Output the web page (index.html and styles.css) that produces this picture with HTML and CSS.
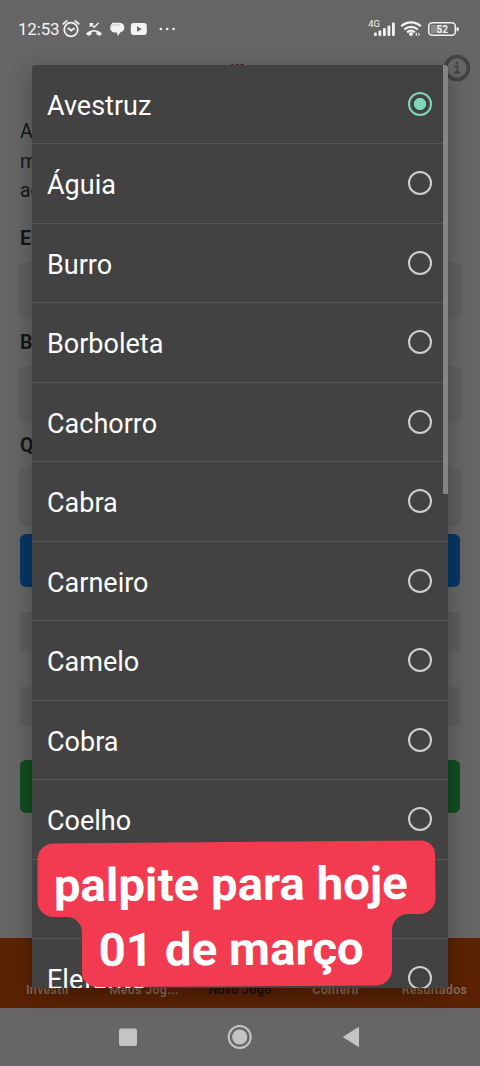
FILE: index.html
```html
<!DOCTYPE html>
<html lang="pt-BR">
<head>
<meta charset="utf-8">
<title>Novo Jogo</title>
<link rel="stylesheet" href="styles.css">
</head>
<body>
<div class="phone">
  <header class="status">
    <span class="clock">12:53</span>
    <svg class="status-left" width="110" height="24" viewBox="0 0 110 24" fill="none">
      <g stroke="#f2f2f2" stroke-width="1.8" stroke-linecap="round">
        <circle cx="9" cy="12.500" r="6.800"/>
        <path d="M6.300 11.300l2.900 2.400 2.800-2.200M1.200 6.900l3.600-3M16.800 6.900l-3.600-3"/>
      </g>
      <path d="M24 16.700c4.500-4.800 11.500-4.800 16 0l-2.300 2.400-3.300-1.800v-2.200c-1.600-.6-3.200-.6-4.800 0v2.200l-3.300 1.800z" fill="#f2f2f2"/>
      <path d="M28.300 10V6.700h3M28.800 7l3.400 3.300 4.300-4.300" stroke="#f2f2f2" stroke-width="1.400"/>
      <path d="M50.500 5.800h6a4.500 4.500 0 0 1 2 9.500l-2.800 3.600-.8-3.300h-2a5 5 0 0 1-4-7.800z" fill="#f2f2f2"/>
      <path d="M49 11c-.3-2.300 1-3.200 3.500-3.200H57.500" stroke="#aaa" stroke-width=".6"/>
      <rect x="68.800" y="6" width="16" height="12" rx="3" fill="#f2f2f2"/>
      <path d="M75 9.300v5.400l4.800-2.700z" fill="#656565"/>
      <g fill="#f2f2f2"><circle cx="98.800" cy="12" r="1.300"/><circle cx="105.200" cy="12" r="1.300"/><circle cx="111.600" cy="12" r="1.300"/></g>
    </svg>
    <span class="network">4G</span>
    <svg class="status-right" width="88" height="24" viewBox="0 0 88 24">
      <g fill="#f2f2f2">
        <rect x="0" y="15.500" width="2.800" height="3.500" rx="1"/><rect x="4.500" y="13.500" width="2.800" height="5.500" rx="1"/><rect x="9" y="11" width="2.800" height="8" rx="1"/><rect x="13.500" y="8.500" width="2.800" height="10.500" rx="1"/><rect x="18" y="5.500" width="2.800" height="13.500" rx="1"/>
        <circle cx="37" cy="17" r="2"/>
        <path d="M41.300 17.300l1.600-2v4.200zM46 17.300l-1.600-2v4.200z"/>
      </g>
      <g fill="none" stroke="#f2f2f2" stroke-width="2.200">
        <path d="M27.300 9.300c5.500-5.200 14-5.200 19.500 0M30.300 12.500c3.900-3.600 9.600-3.600 13.500 0M33.100 15.400c2.300-2 5.500-2 7.800 0"/>
      </g>
      <rect x="54.800" y="5.800" width="26.500" height="12.400" rx="3.500" fill="none" stroke="#f2f2f2" stroke-width="1.500"/>
      <path d="M57 8h11v8.300H57z" fill="#8c8c8c"/>
      <rect x="82.500" y="10.200" width="2.200" height="4" rx="1" fill="#f2f2f2"/>
      <text class="battery-text" x="68.300" y="15.700" text-anchor="middle">52</text>
    </svg>
  </header>

  <main class="page">
    <div class="title-row">
      <h1 class="title">Milhar</h1>
      <svg class="info" width="28" height="28" viewBox="0 0 28 28">
        <circle cx="14" cy="14" r="11.500" fill="none" stroke="#434343" stroke-width="3.600"/>
        <path d="M11.500 12h3v6.500M11 18.500h6" fill="none" stroke="#434343" stroke-width="1.800"/>
        <circle cx="14" cy="8.800" r="1.400" fill="#434343"/>
      </svg>
    </div>
    <p class="intro">A<br>m<br>ac</p>
    <h2 class="label">Es</h2>
    <div class="field"></div>
    <h2 class="label">Bi</h2>
    <div class="field"></div>
    <h2 class="label">Qu</h2>
    <div class="field"></div>
    <div class="button blue"></div>
    <div class="table"><div class="band"></div><div class="band light"></div><div class="band"></div></div>
    <div class="button green"></div>
  </main>

  <nav class="tabs">
    <span class="tab">Investir</span><span class="tab">Meus Jog...</span><span class="tab active">Novo Jogo</span><span class="tab">Conferir</span><span class="tab wide">Resultados</span>
  </nav>
  <footer class="system-nav">
    <svg width="480" height="58" viewBox="0 0 480 58">
      <rect x="119" y="20.500" width="18" height="17.500" rx="2.500" fill="#c5c3c6"/>
      <circle cx="239.700" cy="29" r="11" fill="none" stroke="#c5c3c6" stroke-width="2"/>
      <circle cx="239.700" cy="29" r="7.600" fill="#c5c3c6"/>
      <path d="M343.500 29l15-9.500v19z" fill="#c5c3c6" stroke="#c5c3c6" stroke-linejoin="round"/>
    </svg>
  </footer>

  <div class="dialog">
    <div class="option first"><span>Avestruz</span><i class="radio checked"></i></div>
    <div class="option"><span>Águia</span><i class="radio"></i></div>
    <div class="option"><span>Burro</span><i class="radio"></i></div>
    <div class="option"><span>Borboleta</span><i class="radio"></i></div>
    <div class="option"><span>Cachorro</span><i class="radio"></i></div>
    <div class="option"><span>Cabra</span><i class="radio"></i></div>
    <div class="option"><span>Carneiro</span><i class="radio"></i></div>
    <div class="option"><span>Camelo</span><i class="radio"></i></div>
    <div class="option"><span>Cobra</span><i class="radio"></i></div>
    <div class="option"><span>Coelho</span><i class="radio"></i></div>
    <div class="option"><span></span><i class="radio"></i></div>
    <div class="option"><span>Elefante</span><i class="radio"></i></div>
    <div class="scrollbar"></div>
  </div>

  <svg class="sticker" width="404" height="154" viewBox="0 0 404 154">
    <path d="M17.500 7.500L385 4.500A14 14 0 0 1 399 18.500L399.500 62A16 16 0 0 1 383.500 78L372 78A16 16 0 0 0 356 94L356 133.500A16 16 0 0 1 340 149.500L61 151A15 15 0 0 1 46 136L46 96A15 15 0 0 0 31 81L17.500 81A16 16 0 0 1 1.500 65L1.500 23.500A16 16 0 0 1 17.500 7.500Z" fill="#f23b50"/>
    <g class="sticker-text" transform="rotate(-.4 200 77)">
      <text x="18" y="64" textLength="354" lengthAdjust="spacingAndGlyphs">palpite para hoje</text>
      <text x="62.500" y="129" textLength="265" lengthAdjust="spacingAndGlyphs">01 de março</text>
    </g>
  </svg>
</div>
</body>
</html>
```

FILE: styles.css
```css
* { box-sizing: border-box; }
body { margin: 0; background: #656565; font-family: Roboto, "Liberation Sans", sans-serif; }
.phone { position: relative; width: 480px; height: 1066px; overflow: hidden; display: flex; flex-direction: column; background: #656565; }

.status { height: 54px; flex: none; display: flex; align-items: center; padding: 3px 18px 0 18px; color: #f2f2f2; }
.clock { font-size: 17px; width: 44px; line-height: 24px; letter-spacing: -.2px; white-space: nowrap; }
.status-left { overflow: visible; }
.network { margin-left: auto; font-size: 9.5px; line-height: 10px; padding-bottom: 9px; }
.status-right { margin-left: -6px; overflow: visible; }
.battery-text { font: 700 10px Roboto, sans-serif; fill: #f2f2f2; }

.page { height: 884px; flex: none; padding: 0 20px; color: #171717; }
.title-row { display: flex; justify-content: space-between; height: 63px; margin-right: -11px; }
.title { margin: 7px 0 0 193px; font-size: 19px; line-height: 22px; color: #45181f; }
.info { flex: none; }
.intro { margin: 0; font-size: 19.500px; line-height: 29.500px; height: 108px; }
.label { margin: 0; font-size: 19.500px; line-height: 28px; height: 37px; }
.field { width: 444px; height: 57px; margin: 0 -2px 9.500px; border-radius: 8px; background: #5e5e5e; }
.button { height: 53px; border-radius: 6px; }
.blue { background: #063766; margin-top: -2px; margin-bottom: 25px; }
.green { background: #124d20; }
.table { height: 114px; margin-bottom: 34px; }
.band { height: 39px; background: #5d5d5d; }
.band.light { height: 36px; background: #646464; }

.tabs { height: 70px; flex: none; display: grid; grid-template-columns: repeat(5, 1fr); align-items: end; padding-bottom: 10px; background: #5b2303; color: #85715f; font-size: 12.500px; font-weight: 500; letter-spacing: .3px; line-height: 16px; text-align: center; }
.tab { white-space: nowrap; }
.tab.active { color: #170b05; }
.tab.wide { padding-left: 5px; }
.system-nav { height: 58px; flex: none; background: #676568; }
.system-nav svg { display: block; }

.dialog { position: absolute; left: 32px; top: 65px; width: 416px; height: 923px; overflow: hidden; background: #424242; border-radius: 3px 3px 0 0; box-shadow: 0 8px 22px rgba(0, 0, 0, .28); }
.option { height: 79.500px; display: flex; align-items: center; justify-content: space-between; padding: 0 16px 0 15px; border-bottom: 1.500px solid #565656; color: #fff; font-size: 27px; line-height: 32px; }
.option.first { height: 79px; }
.option span { padding-top: 4px; }
.radio { width: 24px; height: 24px; border: 2.500px solid #cfcfcf; border-radius: 50%; }
.radio.checked { border-color: #80d6bd; background: radial-gradient(circle, #80d6bd 0 5.800px, transparent 6.400px); }
.scrollbar { position: absolute; right: 0; top: 0; width: 5px; height: 429px; background: #858585; }

.sticker { position: absolute; left: 36px; top: 836px; }
.sticker-text { font: 700 46px Roboto, sans-serif; fill: #fff; }
```
